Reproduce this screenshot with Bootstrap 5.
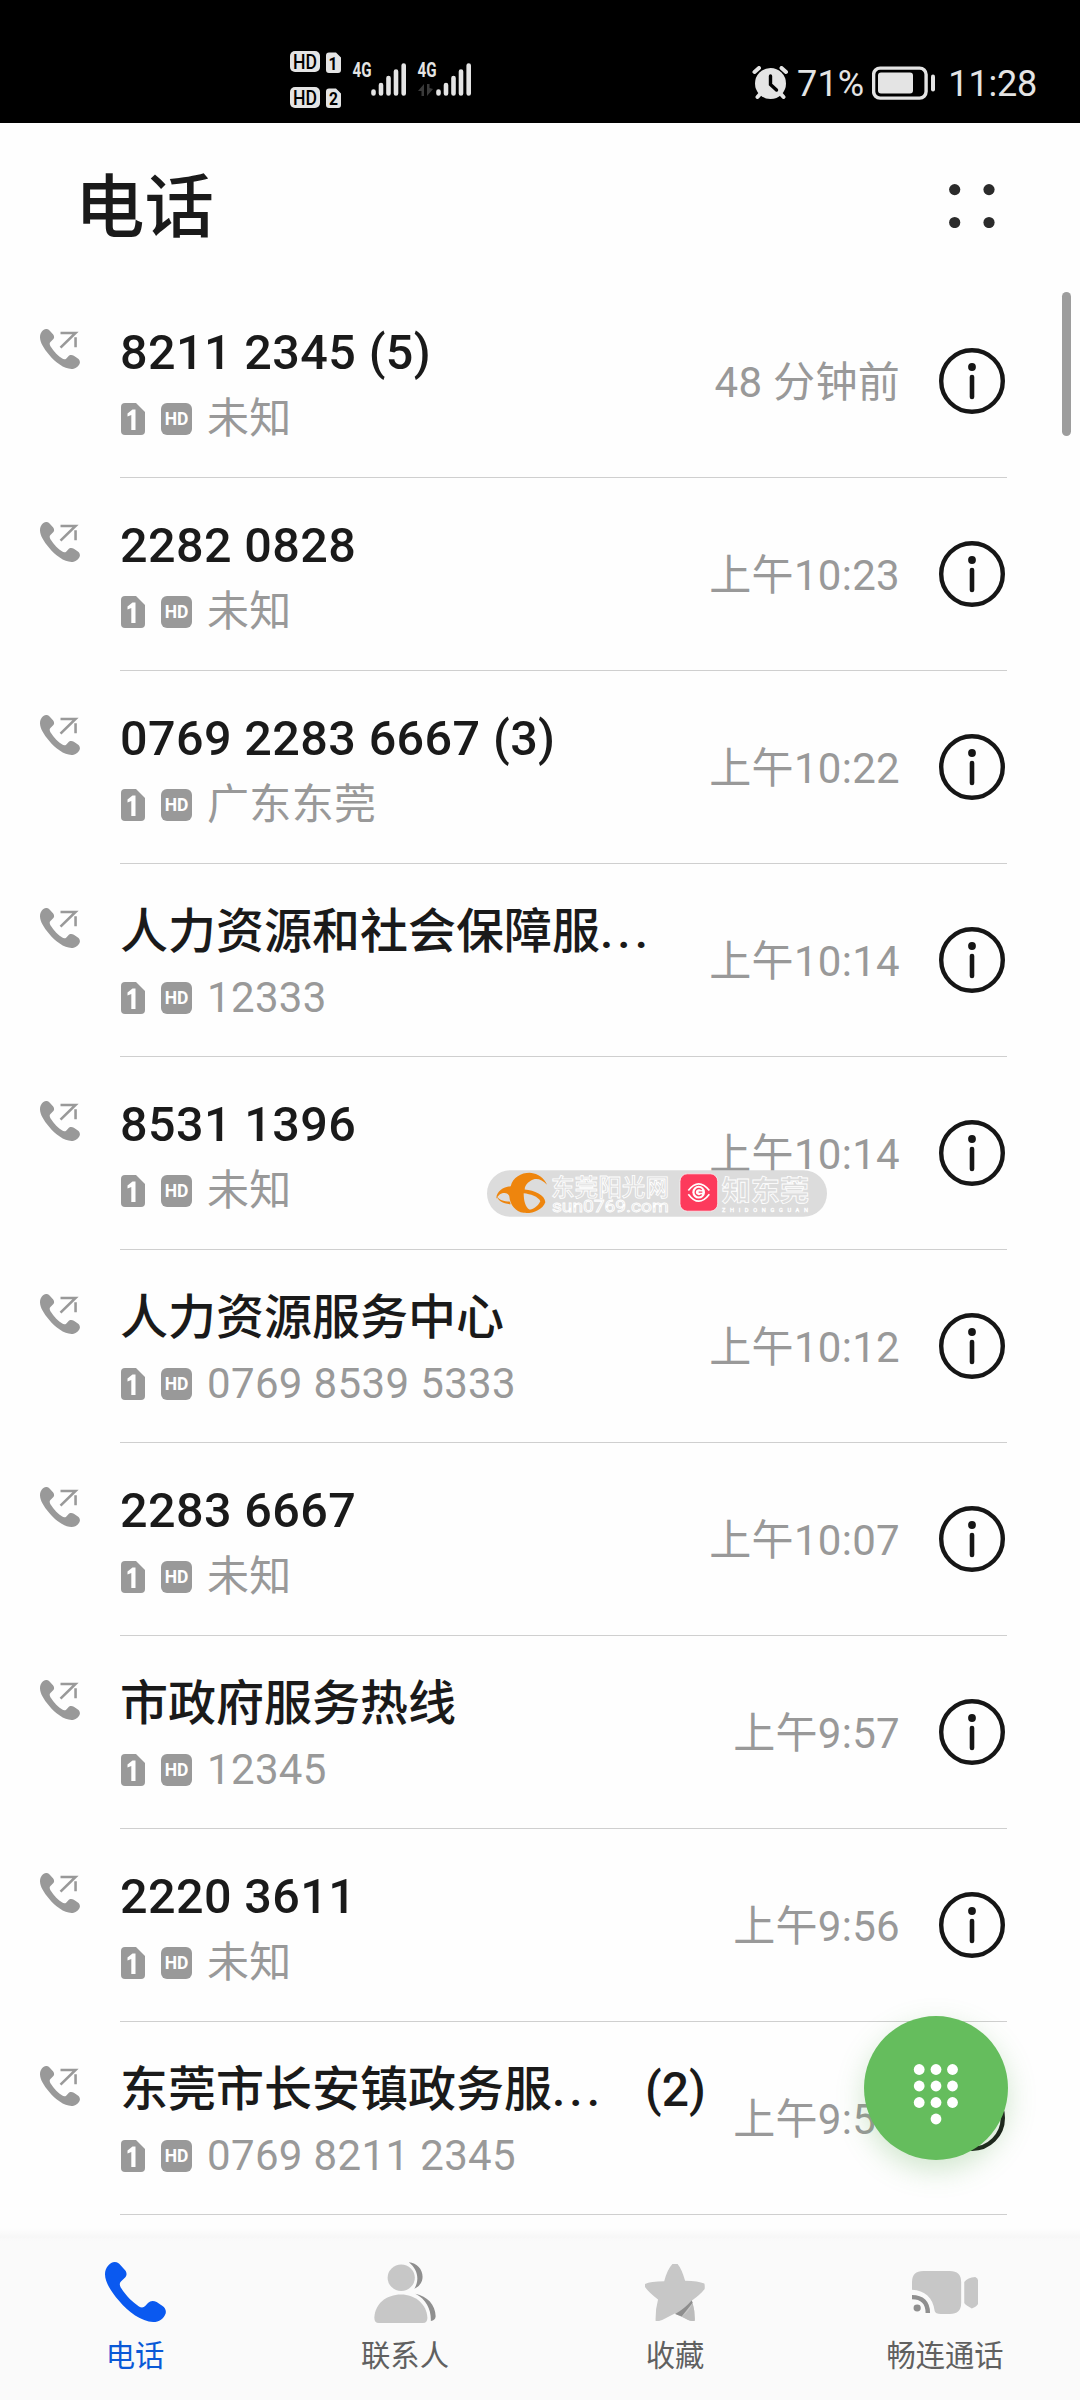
<!DOCTYPE html>
<html lang="zh-CN">
<head>
<meta charset="utf-8">
<meta name="viewport" content="width=device-width, initial-scale=1">
<title>电话</title>
<link href="https://cdn.jsdelivr.net/npm/bootstrap@5.3.0/dist/css/bootstrap.min.css" rel="stylesheet">
<style>
body{font-family:Roboto,"Noto Sans CJK SC",sans-serif;color:#1a1a1a;background:#fefefe;overflow:hidden}
svg{display:block;flex:none}
.phone-screen{width:1080px;height:2400px;overflow:hidden}
.status-strip{height:123px;background:#000;color:#e4e4e4;padding:0 43px 0 290px}
.sys-text{font-size:36px;line-height:40px;color:#e4e4e4}
.app-head{height:162px;padding:0 85px 0 75px}
.app-head h1{font-size:69.5px;line-height:80px;font-weight:500;margin:9px 0 0}
.head-more{margin-top:3px}
.call-row{height:193px;padding-left:40px}
.call-kind{width:80px;padding-top:44px}
.call-body{width:887px;border-bottom:1.5px solid #cfcfcf}
.call-name{font-size:48.5px;line-height:60px;margin-top:38px;font-weight:500;letter-spacing:.4px;white-space:pre}
.call-name.han{font-size:48px;letter-spacing:0}
.dots{letter-spacing:4px}
.count{margin-left:41px}
.call-sub{font-size:42px;line-height:56px;margin-top:8px;color:#999}
.sub-text{margin-left:15px;white-space:pre;letter-spacing:.35px}
.hd-tag{width:31px;height:32px;line-height:32px;margin:-1px 0 0 16px;border-radius:6px;background:#999;color:#fff;font-size:17.5px;font-weight:700;text-align:center}
.sim{margin:-1px 0 0 1px}
.call-time{font-size:42px;line-height:56px;color:#999;margin-right:39px;padding-top:4px;letter-spacing:.3px}
.info{margin-right:2px}
.scroll-thumb{right:9px;top:292px;width:9px;height:144px;border-radius:5px;background:#9d9d9d}
.fab{left:864px;top:2016px;width:144px;height:144px;background:#65bd5d;box-shadow:0 10px 28px rgba(90,170,80,.28)}
.watermark{left:487px;top:1170px}
.tabs-bar{top:2228px;height:172px;background:linear-gradient(#fefefe,#f7f7f7 9px,#fafafa 13px);padding-top:30px}
.tabs-bar a{color:#606060;font-size:29.3px;line-height:36px;font-weight:400}
.tabs-bar a.active{color:#0a59d7}
.tabs-bar .glyph{height:68px}
.tabs-bar .caption-text{margin-top:12px}
</style>
</head>
<body>
<svg width="0" height="0" class="position-absolute" aria-hidden="true">
  <symbol id="out" viewBox="116 567 117 121" preserveAspectRatio="none">
    <path transform="translate(-86.1 483.4) scale(.6648 .6685)" fill="#999" d="M304 162C304 142 318 125 332 125C340 125 345 130 349 135L362 150C367 156 368 166 362 172L350 184C345 189 346 196 350 203C366 230 385 247 402 259C408 263 415 263 420 258L428 249C435 241 444 241 453 246L469 257C478 263 481 272 479 280C474 295 460 306 443 306C410 306 370 275 345 243C320 213 304 185 304 162Z"/>
    <path d="M176 579H220L176 623M220 592V622" fill="none" stroke="#999" stroke-width="7.500"/>
  </symbol>
  <symbol id="sim" viewBox="0 0 24 32">
    <path d="M4 0H15L24 9V28Q24 32 20 32H4Q0 32 0 28V4Q0 0 4 0Z" fill="#999"/>
    <path d="M6.500 10.500L11.500 6.500H14.500V27H10.300V12L6.500 13.500Z" fill="#fff"/>
  </symbol>
  <symbol id="info" viewBox="0 0 66 66">
    <circle cx="33" cy="33" r="30.800" fill="none" stroke="#161616" stroke-width="4.400"/>
    <circle cx="33" cy="19" r="3.900" fill="#161616"/><path d="M33 29V49" stroke="#161616" stroke-width="4.600" stroke-linecap="round"/>
  </symbol>
</svg>
<div class="phone-screen position-relative d-flex flex-column">
  <header class="status-strip d-flex align-items-start">
    <svg width="182" height="62" viewBox="290 49 182 62" style="margin-top:49px" font-family="Roboto,sans-serif" font-weight="700">
      <g fill="#e4e4e4"><rect x="290" y="51" width="30" height="21" rx="5"/><rect x="290" y="87" width="30" height="21" rx="5"/>
      <path d="M329 52.500H336L341 57.500V70Q341 73 338 73H329Q326 73 326 70V55.500Q326 52.500 329 52.500ZM329 88.500H336L341 93.500V105Q341 108 338 108H329Q326 108 326 105V91.500Q326 88.500 329 88.500Z"/></g>
      <g font-size="20" fill="#000" font-weight="500"><text x="293" y="68.700" textLength="24" lengthAdjust="spacingAndGlyphs">HD</text><text x="293" y="104.700" textLength="24" lengthAdjust="spacingAndGlyphs">HD</text><text x="328.500" y="69.500" font-size="18" font-weight="700" textLength="9" lengthAdjust="spacingAndGlyphs">1</text><text x="329" y="105" font-size="18" font-weight="700" textLength="9" lengthAdjust="spacingAndGlyphs">2</text></g>
      <g font-size="19.500" fill="#e4e4e4"><text x="352.500" y="77" textLength="19" lengthAdjust="spacingAndGlyphs">4G</text><text x="417.500" y="77" textLength="19" lengthAdjust="spacingAndGlyphs">4G</text></g>
      <path stroke="#e4e4e4" stroke-width="4.600" stroke-linecap="round" d="M373.500 91.500V93.500M381 85V93.500M388.500 78V93.500M396 71.500V93.500M403.700 65.500V93.500M438.500 91.500V93.500M446 85V93.500M453.500 78V93.500M461 71.500V93.500M468.700 65.500V93.500"/>
      <path d="M418 91L424 84V96H421.500V91ZM427 84H429.500V88L433 89L427 96Z" fill="#3a3a3a"/>
    </svg>
    <div class="d-flex align-items-center ms-auto" style="margin-top:62px">
      <svg width="36" height="34" viewBox="752 63 36 34"><circle cx="770.500" cy="80.500" r="15.500" fill="#e4e4e4"/><path d="M754.500 69L759 65M786 69L781.500 65" stroke="#e4e4e4" stroke-width="4" stroke-linecap="round"/><path d="M757.500 94L761 90M783.500 94L780 90" stroke="#e4e4e4" stroke-width="4" stroke-linecap="round"/><path d="M770.500 73V81.500L776.500 87" fill="none" stroke="#000" stroke-width="3.400" stroke-linecap="round"/></svg>
      <span class="sys-text" style="margin-left:9px;width:69px;letter-spacing:.2px;padding-top:2px">71%</span>
      <svg width="64" height="34" viewBox="872 63.500 64 34" style="margin-left:6px"><rect x="873.600" y="65.600" width="52.500" height="30" rx="6.500" fill="none" stroke="#e4e4e4" stroke-width="3.400"/><rect x="878" y="70" width="35" height="21" rx="3" fill="#e4e4e4"/><path d="M933 74V87" stroke="#e4e4e4" stroke-width="4" stroke-linecap="round"/></svg>
      <span class="sys-text text-end" style="margin-left:12px;width:89px;letter-spacing:-.2px;padding-top:2px">11:28</span>
    </div>
  </header>
  <div class="app-head d-flex align-items-center justify-content-between">
    <h1>电话</h1>
    <svg class="head-more" width="46" height="44" viewBox="0 0 46 44" fill="#2b2b2b"><circle cx="5.700" cy="5.600" r="5.600"/><circle cx="40" cy="5.600" r="5.600"/><circle cx="5.700" cy="38.500" r="5.600"/><circle cx="40" cy="38.500" r="5.600"/></svg>
  </div>
  <main>
    <div class="call-row d-flex"><div class="call-kind"><svg width="40" height="40"><use href="#out"/></svg></div><div class="call-body d-flex align-items-center"><div class="align-self-start flex-grow-1"><div class="call-name">8211 2345 (5)</div><div class="call-sub d-flex align-items-center"><svg class="sim" width="24" height="32"><use href="#sim"/></svg><span class="hd-tag">HD</span><span class="sub-text">未知</span></div></div><div class="call-time">48 分钟前</div><svg class="info" width="66" height="66"><use href="#info"/></svg></div></div>
    <div class="call-row d-flex"><div class="call-kind"><svg width="40" height="40"><use href="#out"/></svg></div><div class="call-body d-flex align-items-center"><div class="align-self-start flex-grow-1"><div class="call-name">2282 0828</div><div class="call-sub d-flex align-items-center"><svg class="sim" width="24" height="32"><use href="#sim"/></svg><span class="hd-tag">HD</span><span class="sub-text">未知</span></div></div><div class="call-time">上午10:23</div><svg class="info" width="66" height="66"><use href="#info"/></svg></div></div>
    <div class="call-row d-flex"><div class="call-kind"><svg width="40" height="40"><use href="#out"/></svg></div><div class="call-body d-flex align-items-center"><div class="align-self-start flex-grow-1"><div class="call-name">0769 2283 6667 (3)</div><div class="call-sub d-flex align-items-center"><svg class="sim" width="24" height="32"><use href="#sim"/></svg><span class="hd-tag">HD</span><span class="sub-text">广东东莞</span></div></div><div class="call-time">上午10:22</div><svg class="info" width="66" height="66"><use href="#info"/></svg></div></div>
    <div class="call-row d-flex"><div class="call-kind"><svg width="40" height="40"><use href="#out"/></svg></div><div class="call-body d-flex align-items-center"><div class="align-self-start flex-grow-1"><div class="call-name han">人力资源和社会保障服<span class="dots">...</span></div><div class="call-sub d-flex align-items-center"><svg class="sim" width="24" height="32"><use href="#sim"/></svg><span class="hd-tag">HD</span><span class="sub-text">12333</span></div></div><div class="call-time">上午10:14</div><svg class="info" width="66" height="66"><use href="#info"/></svg></div></div>
    <div class="call-row d-flex"><div class="call-kind"><svg width="40" height="40"><use href="#out"/></svg></div><div class="call-body d-flex align-items-center"><div class="align-self-start flex-grow-1"><div class="call-name">8531 1396</div><div class="call-sub d-flex align-items-center"><svg class="sim" width="24" height="32"><use href="#sim"/></svg><span class="hd-tag">HD</span><span class="sub-text">未知</span></div></div><div class="call-time">上午10:14</div><svg class="info" width="66" height="66"><use href="#info"/></svg></div></div>
    <div class="call-row d-flex"><div class="call-kind"><svg width="40" height="40"><use href="#out"/></svg></div><div class="call-body d-flex align-items-center"><div class="align-self-start flex-grow-1"><div class="call-name han">人力资源服务中心</div><div class="call-sub d-flex align-items-center"><svg class="sim" width="24" height="32"><use href="#sim"/></svg><span class="hd-tag">HD</span><span class="sub-text">0769 8539 5333</span></div></div><div class="call-time">上午10:12</div><svg class="info" width="66" height="66"><use href="#info"/></svg></div></div>
    <div class="call-row d-flex"><div class="call-kind"><svg width="40" height="40"><use href="#out"/></svg></div><div class="call-body d-flex align-items-center"><div class="align-self-start flex-grow-1"><div class="call-name">2283 6667</div><div class="call-sub d-flex align-items-center"><svg class="sim" width="24" height="32"><use href="#sim"/></svg><span class="hd-tag">HD</span><span class="sub-text">未知</span></div></div><div class="call-time">上午10:07</div><svg class="info" width="66" height="66"><use href="#info"/></svg></div></div>
    <div class="call-row d-flex"><div class="call-kind"><svg width="40" height="40"><use href="#out"/></svg></div><div class="call-body d-flex align-items-center"><div class="align-self-start flex-grow-1"><div class="call-name han">市政府服务热线</div><div class="call-sub d-flex align-items-center"><svg class="sim" width="24" height="32"><use href="#sim"/></svg><span class="hd-tag">HD</span><span class="sub-text">12345</span></div></div><div class="call-time">上午9:57</div><svg class="info" width="66" height="66"><use href="#info"/></svg></div></div>
    <div class="call-row d-flex"><div class="call-kind"><svg width="40" height="40"><use href="#out"/></svg></div><div class="call-body d-flex align-items-center"><div class="align-self-start flex-grow-1"><div class="call-name">2220 3611</div><div class="call-sub d-flex align-items-center"><svg class="sim" width="24" height="32"><use href="#sim"/></svg><span class="hd-tag">HD</span><span class="sub-text">未知</span></div></div><div class="call-time">上午9:56</div><svg class="info" width="66" height="66"><use href="#info"/></svg></div></div>
    <div class="call-row d-flex"><div class="call-kind"><svg width="40" height="40"><use href="#out"/></svg></div><div class="call-body d-flex align-items-center"><div class="align-self-start flex-grow-1"><div class="call-name han d-flex"><div>东莞市长安镇政务服<span class="dots">...</span></div><div class="count">(2)</div></div><div class="call-sub d-flex align-items-center"><svg class="sim" width="24" height="32"><use href="#sim"/></svg><span class="hd-tag">HD</span><span class="sub-text">0769 8211 2345</span></div></div><div class="call-time">上午9:55</div><svg class="info" width="66" height="66"><use href="#info"/></svg></div></div>
  </main>
  <div class="scroll-thumb position-absolute"></div>
  <svg class="watermark position-absolute" width="340" height="47" viewBox="80 150 1020 140">
    <rect x="80" y="150" width="1020" height="140" rx="70" fill="#dcdcdc"/>
    <path d="M108 236C108 212 130 200 151 198C158 172 182 158 208 158C235 160 253 176 260 194C244 176 225 172 211 182C198 190 193 199 193 208C222 210 254 225 255 246C246 270 215 281 190 278C165 275 149 253 147 229C146 216 119 211 108 236ZM108 226C116 240 130 244 148 244L151 252C128 251 112 241 108 226Z" fill="#ee850d"/>
    <path d="M190 219C210 221 234 229 240 243C233 258 218 268 207 268C195 261 190 240 190 219Z" fill="#dcdcdc"/>
    <g fill="#dcdcdc" stroke="#fff" stroke-width="2.500" font-family="'Noto Sans CJK SC',sans-serif">
      <text x="272" y="229" font-size="70" font-weight="500" textLength="354" lengthAdjust="spacingAndGlyphs">东莞阳光网</text>
      <text x="275" y="275" font-size="50" font-family="Roboto,sans-serif" textLength="350" lengthAdjust="spacingAndGlyphs">sun0769.com</text>
      <text x="784" y="243" font-size="86" font-weight="700" textLength="262" lengthAdjust="spacingAndGlyphs">知东莞</text>
      <text x="785" y="275" font-size="17" stroke-width="1" fill="#fff" font-family="Roboto,sans-serif" textLength="258">ZHIDONGGUAN</text>
    </g>
    <rect x="659" y="161" width="113" height="112" rx="22" fill="#fd3a5c" stroke="#fff" stroke-width="2"/>
    <path d="M684 211Q715 171 747 211M684 222Q715 264 747 222" fill="none" stroke="#fff" stroke-width="5"/><circle cx="715" cy="216" r="19" fill="#fff"/><path d="M724 209A11 11 0 1 0 724 223M715 216H726" fill="none" stroke="#fd3a5c" stroke-width="4"/>
  </svg>
  <button class="fab position-absolute btn rounded-circle border-0 p-0 d-flex align-items-center justify-content-center" aria-label="拨号">
    <svg width="46" height="62" viewBox="0 0 46 62" fill="#fff" style="margin-top:11px"><circle cx="6.200" cy="6.500" r="5.400"/><circle cx="23" cy="6.500" r="5.400"/><circle cx="39.500" cy="6.500" r="5.400"/><circle cx="6.200" cy="23" r="5.400"/><circle cx="23" cy="23" r="5.400"/><circle cx="39.500" cy="23" r="5.400"/><circle cx="6.200" cy="39.500" r="5.400"/><circle cx="23" cy="39.500" r="5.400"/><circle cx="39.500" cy="39.500" r="5.400"/><circle cx="23" cy="56" r="5.400"/></svg>
  </button>
  <nav class="tabs-bar position-absolute start-0 end-0">
    <div class="d-flex text-center">
      <a class="w-25 text-decoration-none active"><div class="glyph d-flex align-items-center justify-content-center"><svg width="61" height="60" viewBox="304 125 176 181" preserveAspectRatio="none"><path fill="#0a59f0" d="M304 162C304 142 318 125 332 125C340 125 345 130 349 135L362 150C367 156 368 166 362 172L350 184C345 189 346 196 350 203C366 230 385 247 402 259C408 263 415 263 420 258L428 249C435 241 444 241 453 246L469 257C478 263 481 272 479 280C474 295 460 306 443 306C410 306 370 275 345 243C320 213 304 185 304 162Z"/></svg></div><div class="caption-text">电话</div></a>
      <a class="w-25 text-decoration-none"><div class="glyph d-flex align-items-center justify-content-center"><svg width="62" height="61" viewBox="1087 124 180 182" preserveAspectRatio="none"><g fill="#c7c7c7"><circle cx="1166" cy="171" r="39.500"/><path d="M1088 290C1090 248 1124 221 1165 221C1207 221 1240 250 1242 290Q1242 306 1229 306H1101Q1088 306 1088 290Z"/></g><path fill="#8f8f8f" d="M1188 125C1212 127 1228 146 1228 168C1228 184 1219 197 1204 204C1220 177 1214 146 1188 125ZM1207 219C1242 226 1265 252 1266 286Q1265 299 1252 300C1253 266 1239 236 1207 219Z"/></svg></div><div class="caption-text">联系人</div></a>
      <a class="w-25 text-decoration-none"><div class="glyph d-flex align-items-center justify-content-center"><svg width="60" height="57" viewBox="304 131 175 169" preserveAspectRatio="none"><path fill="#c7c7c7" d="M384 131H399Q411 145 421 181Q460 182 477 189Q479 193 478 205Q466 221 441 239Q450 270 449 299Q440 301 430 297L391 278L354 297Q343 302 335 300Q334 265 342 236Q315 215 304 199V190Q320 182 360 182Q369 147 384 131Z"/><path fill="#8e8e8e" d="M440 239L443 246L411 287L392 279Q420 263 440 239Z"/><path fill="#bcbcbc" d="M443 247Q432 275 411 287L430 297Q440 301 449 299Q450 273 443 247Z"/></svg></div><div class="caption-text">收藏</div></a>
      <a class="w-25 text-decoration-none"><div class="glyph d-flex align-items-center justify-content-center"><svg width="66" height="43" viewBox="1080 152 192 130" preserveAspectRatio="none"><path fill="#c7c7c7" d="M1080 209V185Q1080 152 1113 152H1190Q1223 152 1223 185V249Q1223 282 1190 282H1164Q1148 282 1146 273C1141 232 1117 211 1080 209ZM1232 185Q1242 172 1264 170Q1272 174 1272 180V252Q1268 260 1254 265Q1238 258 1232 249Z"/><path d="M1080 231C1109 231 1126 247 1126 279" fill="none" stroke="#8f8f8f" stroke-width="13"/><circle cx="1095" cy="264" r="10.500" fill="#8f8f8f"/></svg></div><div class="caption-text">畅连通话</div></a>
    </div>
  </nav>
</div>
<script src="https://cdn.jsdelivr.net/npm/bootstrap@5.3.0/dist/js/bootstrap.bundle.min.js"></script>
</body>
</html>
